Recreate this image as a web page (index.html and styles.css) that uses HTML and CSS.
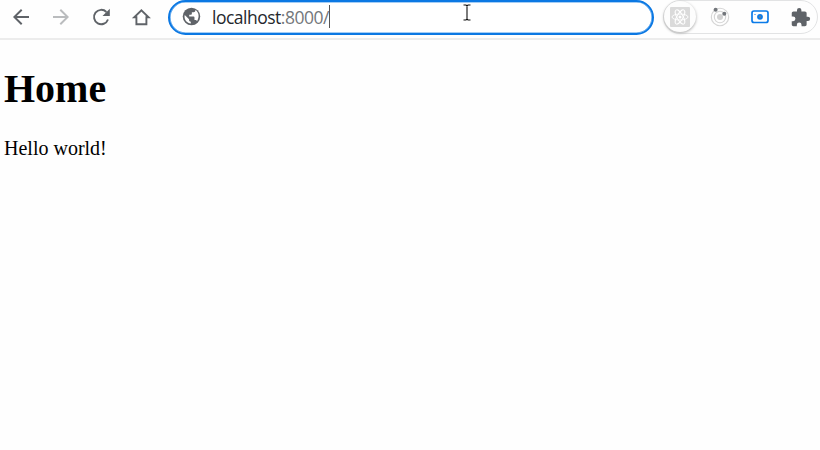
FILE: index.html
```html
<!DOCTYPE html>
<html lang="en">
<head>
<meta charset="utf-8">
<title>Home</title>
<link rel="stylesheet" href="styles.css">
</head>
<body>
<header class="toolbar">
  <nav class="nav">
    <span class="tool"><svg class="icon" viewBox="0 0 24 24"><path d="M20 11H7.8l5.6-5.6L12 4l-8 8 8 8 1.4-1.4L7.8 13H20z"/></svg></span>
    <span class="tool disabled"><svg class="icon" viewBox="0 0 24 24"><path d="M4 11h12.2l-5.6-5.6L12 4l8 8-8 8-1.4-1.4 5.6-5.6H4z"/></svg></span>
    <span class="tool"><svg class="icon" viewBox="0 0 24 24"><path class="line" d="M19 14.500A7.200 7.200 0 1 1 17.400 7"/><path d="M20.800 3.700v7.300h-7.300z"/></svg></span>
    <span class="tool"><svg class="icon" viewBox="0 0 24 24"><path class="line" d="M5.200 12.200H7.400v7.100h10v-7.100h2.200L12.400 5.200z"/></svg></span>
  </nav>
  <div class="address">
    <svg class="globe" viewBox="0 0 24 24"><circle cx="12" cy="12" r="10"/><path class="land" d="M4.300 10.300 9.200 15v1c0 1.100.9 2 2 2v2C6.800 19.600 4 16 4 12zM18.300 17.300c-.3-.8-1-1.300-1.900-1.300h-1v-3c0-.6-.4-1-1-1h-5v-2h2c.6 0 1-.4 1-1V7h2c1.100 0 2-.9 2-2v-.3c4 2 5 8 1.900 12.600z"/></svg>
    <span class="url"><span class="host">localhost</span>:8000/</span><span class="caret"></span>
    <svg class="pointer" viewBox="0 0 8 17"><path d="M.5 1H3l1 1 1-1h2.500M4 2v13M.5 16H3l1-1 1 1h2.500"/></svg>
  </div>
  <div class="extensions">
    <span class="round"><svg class="react" viewBox="0 0 20 20"><rect width="20" height="20" rx="1"/><g><ellipse cx="10" cy="10" rx="8" ry="3"/><ellipse cx="10" cy="10" rx="8" ry="3" transform="rotate(60 10 10)"/><ellipse cx="10" cy="10" rx="8" ry="3" transform="rotate(120 10 10)"/></g><circle cx="10" cy="10" r="1.500"/></svg></span>
    <span class="tool"><svg class="orbit" viewBox="0 0 20 20"><circle class="ring" cx="10" cy="10" r="8.700"/><circle class="ring" cx="10" cy="10" r="5.700"/><circle class="core" cx="10" cy="10" r="3"/><circle class="dot" cx="5.600" cy="2.700" r="2"/><circle class="dot" cx="14.300" cy="6.700" r="2"/></svg></span>
    <span class="tool"><svg class="camera" viewBox="0 0 18 14"><rect x="1" y="1" width="16" height="11.500" rx="2"/><circle class="lens" cx="9" cy="6.800" r="2.900"/><circle class="shine" cx="9" cy="6.800" r="1.200"/><path class="flash" d="M3.500 4.500h1"/></svg></span>
    <span class="tool"><svg class="puzzle" viewBox="0 0 24 24"><path d="M20.500 11H19V7c0-1.100-.9-2-2-2h-4V3.500a2.500 2.500 0 0 0-5 0V5H4c-1.100 0-2 .9-2 2v3.800h1.500a2.700 2.700 0 0 1 0 5.400H2V20c0 1.100.9 2 2 2h3.800v-1.500a2.700 2.700 0 0 1 5.400 0V22H17c1.100 0 2-.9 2-2v-4h1.500a2.500 2.500 0 0 0 0-5z"/></svg></span>
  </div>
</header>
<main class="page">
  <h1 class="title">Home</h1>
  <p class="text">Hello world!</p>
</main>
</body>
</html>
```
FILE: styles.css
```css
body {
  margin: 0;
  background: #fefefe;
  color: #000;
  overflow: hidden;
}
.toolbar {
  display: flex;
  box-sizing: border-box;
  height: 40px;
  padding-left: 1px;
  border-bottom: 2px solid #ececec;
}
.nav {
  display: flex;
  height: 33px;
}
.tool {
  display: flex;
  width: 40px;
  align-items: center;
  justify-content: center;
}
.icon {
  width: 24px;
  height: 24px;
  fill: #5f6368;
}
.line {
  fill: none;
  stroke: #5f6368;
  stroke-width: 1.9;
}
.disabled .icon {
  fill: #babcbe;
}
.address {
  position: relative;
  display: flex;
  align-items: center;
  box-sizing: border-box;
  width: 486px;
  height: 35px;
  margin-left: 7px;
  padding: 0 0 2px 11px;
  border: 2px solid #0b78e3;
  border-radius: 18px;
  background: #fff;
  box-shadow: inset 0 0 0 0.6px #4a9cec;
}
.globe {
  width: 21px;
  height: 21px;
  fill: #5f6368;
}
.land {
  fill: #fff;
}
.url {
  margin-left: 10px;
  font: 17.5px/24px "Open Sans", "Noto Sans", sans-serif;
  letter-spacing: -0.5px;
  color: #74777b;
}
.host {
  color: #25282c;
}
.caret {
  width: 1px;
  height: 23px;
  margin-left: 0.5px;
  background: #555;
}
.pointer {
  position: absolute;
  left: 293px;
  top: 2px;
  width: 8px;
  height: 17px;
  fill: none;
  stroke: #111;
  stroke-width: 1.1;
}
.extensions {
  display: flex;
  box-sizing: border-box;
  width: 155px;
  height: 34px;
  margin-left: 9px;
  border: 1px solid #e2e3e4;
  border-radius: 17px;
}
.round {
  display: flex;
  flex: none;
  align-items: center;
  justify-content: center;
  width: 32px;
  height: 31px;
  margin-right: 4px;
  border-radius: 50%;
  background: #fdfdfd;
  box-shadow: 0 1px 3px #aaa;
}
.extensions .tool {
  flex: none;
}
.react {
  width: 20px;
  height: 20px;
  fill: #dadada;
}
.react g {
  fill: none;
  stroke: #fff;
  stroke-width: 0.9;
}
.react circle {
  fill: #fff;
}
.orbit {
  width: 20px;
  height: 20px;
}
.ring {
  fill: none;
  stroke: #d5d5d5;
  stroke-width: 1.1;
}
.core {
  fill: #d2d2d2;
}
.dot {
  fill: #72767b;
}
.camera {
  width: 18px;
  height: 14px;
  fill: none;
  stroke: #0b7be8;
  stroke-width: 1.7;
}
.lens {
  fill: #0b7be8;
  stroke: none;
}
.shine {
  fill: #5d7f9f;
  stroke: none;
}
.flash {
  stroke-width: 1;
}
.puzzle {
  width: 21px;
  height: 21px;
  fill: #5f6368;
}
.page {
  padding: 26px 4px 0;
  font-family: "Liberation Serif", serif;
}
.title {
  margin: 0;
  font-size: 40px;
  line-height: 46px;
}
.text {
  margin: 25px 0 0;
  font-size: 20px;
  line-height: 23px;
}
```
